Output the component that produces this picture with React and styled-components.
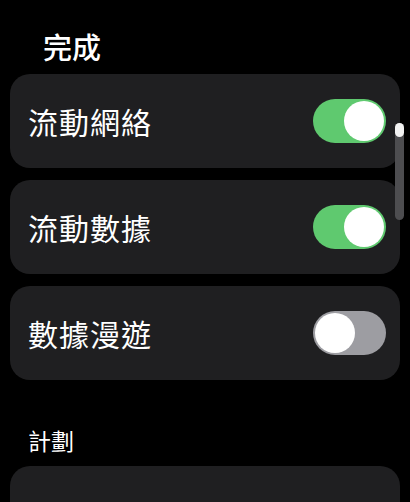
import React, { useState } from 'react'
import styled, { createGlobalStyle } from 'styled-components'

const Global = createGlobalStyle`
  html, body {
    margin: 0;
    padding: 0;
    background: #000;
  }
  body {
    font-family: "Noto Sans CJK TC", "Noto Sans", sans-serif;
    color: #fff;
  }
`

const Screen = styled.div`
  position: relative;
  width: 410px;
  height: 502px;
  overflow: hidden;
  background: #000;
  padding: 24px 10px 0 10px;
  box-sizing: border-box;
`

const Title = styled.div`
  font-size: 29px;
  font-weight: 500;
  line-height: 44px;
  padding-left: 33px;
  margin-bottom: 6px;
`

const List = styled.div`
  display: flex;
  flex-direction: column;
  gap: 12px;
`

const Card = styled.div`
  display: flex;
  align-items: center;
  justify-content: space-between;
  height: 94px;
  border-radius: 20px;
  background: #1f1f21;
  padding: 0 14px 0 18px;
  box-sizing: border-box;
`

const Label = styled.span`
  font-size: 30px;
  letter-spacing: 1px;
  line-height: 1;
`

const Track = styled.button`
  position: relative;
  width: 73px;
  height: 44px;
  border: none;
  border-radius: 22px;
  padding: 0;
  cursor: pointer;
  background: ${p => (p.$on ? '#5fc96f' : '#9d9da2')};
`

const Thumb = styled.span`
  position: absolute;
  top: 2px;
  left: ${p => (p.$on ? '31px' : '2px')};
  width: 40px;
  height: 40px;
  border-radius: 50%;
  background: #fff;
  transition: left 0.2s;
`

const Section = styled.div`
  font-size: 23px;
  padding: 45px 0 0 18px;
  line-height: 30px;
  margin-bottom: 11px;
`

const Scroller = styled.div`
  position: absolute;
  top: 123px;
  left: 395px;
  width: 9px;
  height: 97px;
  border-radius: 5px;
  background: #4d4d50;
  &::before {
    content: '';
    display: block;
    width: 9px;
    height: 14px;
    border-radius: 5px;
    background: #f2f2f2;
  }
`

function Toggle({ on, onClick }) {
  return (
    <Track $on={on} onClick={onClick}>
      <Thumb $on={on} />
    </Track>
  )
}

export default function App() {
  const [opts, setOpts] = useState({ cell: true, data: true, roam: false })

  const rows = [
    { key: 'cell', label: '流動網絡' },
    { key: 'data', label: '流動數據' },
    { key: 'roam', label: '數據漫遊' },
  ]

  return (
    <Screen>
      <Global />
      <Title>完成</Title>
      <List>
        {rows.map(r => (
          <Card key={r.key}>
            <Label>{r.label}</Label>
            <Toggle on={opts[r.key]} onClick={() => setOpts({ ...opts, [r.key]: !opts[r.key] })} />
          </Card>
        ))}
      </List>
      <Section>計劃</Section>
      <Card />
      <Scroller />
    </Screen>
  )
}
